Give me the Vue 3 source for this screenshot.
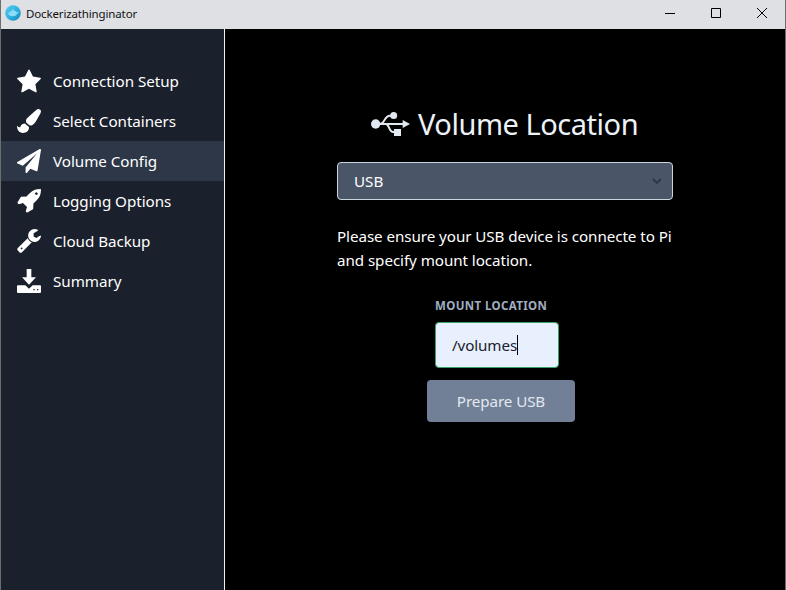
<script setup>
import { ref } from 'vue'

const items = [
  {
    label: 'Connection Setup', box: '64 0 1664 1664',
    path: 'M1728 647q0 22-26 48l-363 354 86 500q1 7 1 20 0 21-10.500 35.500t-30.500 14.500q-19 0-40-12l-449-236-449 236q-22 12-40 12-21 0-31.500-14.500t-10.500-35.500q0-6 2-20l86-500-364-354q-25-27-25-48 0-37 56-46l502-73 225-455q19-41 49-41t49 41l225 455 502 73q56 9 56 46z',
  },
  {
    label: 'Select Containers', box: '0 0 512 512',
    path: 'M167.02 309.34c-40.12 2.58-76.53 17.86-97.19 72.3-2.35 6.21-8 9.98-14.59 9.98-11.11 0-45.46-27.67-55.25-34.35C0 439.62 37.93 512 128 512c75.86 0 128-43.77 128-120.19 0-3.11-.65-6.08-.97-9.13l-88.01-73.34zM457.89 0c-15.16 0-29.37 6.71-40.21 16.45C213.27 199.05 192 203.34 192 257.09c0 13.7 3.25 26.76 8.73 38.7l63.82 53.18c7.21 1.8 14.64 3.03 22.39 3.03 62.11 0 98.11-45.47 211.16-256.46 7.38-14.35 13.9-29.85 13.9-45.99C512 20.64 486 0 457.89 0z',
  },
  {
    label: 'Volume Config', active: true, box: '0 0 1792 1792',
    path: 'M1764 11q33 24 27 64l-256 1536q-5 29-32 45-14 8-31 8-11 0-24-5l-453-185-242 295q-18 23-49 23-13 0-22-4-19-7-30.500-23.500t-11.500-36.500v-349l864-1059-1069 925-395-162q-37-14-40-55-2-40 32-59l1664-960q15-9 32-9 20 0 36 11z',
  },
  {
    label: 'Logging Options', box: '0 128 1664 1664',
    path: 'M1440 448q0-40-28-68t-68-28-68 28-28 68 28 68 68 28 68-28 28-68zm224-288q0 249-75.5 430.5t-253.500 360.500q-81 80-195 176l-20 379q-2 16-16 26l-384 224q-7 4-16 4-12 0-23-9l-64-64q-13-14-8-32l85-276-281-281-276 85q-3 1-9 1-14 0-23-9l-64-64q-17-19-5-39l224-384q10-14 26-16l379-20q96-114 176-195 188-187 358-258t431-71q14 0 24 9.500t10 22.500z',
  },
  {
    label: 'Cloud Backup', box: '64 128 1664 1664',
    path: 'M448 1472q0-26-19-45t-45-19-45 19-19 45 19 45 45 19 45-19 19-45zm644-420l-682 682q-37 37-90 37-52 0-91-37l-106-108q-38-36-38-90 0-53 38-91l681-681q39 98 114.500 173.500t173.500 114.500zm634-435q0 39-23 106-47 134-164.500 217.500t-258.500 83.500q-185 0-316.500-131.500t-131.500-316.500 131.500-316.500 316.500-131.500q58 0 121.500 16.500t107.500 46.500q16 11 16 28t-16 28l-293 169v224l193 107q5-3 79-48.500t135.500-81 70.500-35.500q15 0 23.500 10t8.500 25z',
  },
  {
    label: 'Summary', box: '0 0 72 72',
    path: 'M29 0H43V25H57L36 47 15 25H29ZM3 49H25L36 59 47 49H69Q72 49 72 52V69Q72 72 69 72H3Q0 72 0 69V52Q0 49 3 49ZM49 60V64H53V60ZM60 60V64H64V60Z',
  },
]
const mount = ref('/volumes')
</script>

<template>
  <div class="window">
    <header class="titlebar">
      <svg class="logo" viewBox="0 0 16 16">
        <defs>
          <linearGradient id="sea" x1="0" y1="0" x2="1" y2="1">
            <stop offset="0" stop-color="#58cbed" />
            <stop offset="0.5" stop-color="#2fb4e4" />
            <stop offset="1" stop-color="#1683b4" />
          </linearGradient>
        </defs>
        <circle cx="8" cy="8" r="7.8" fill="url(#sea)" />
        <path d="M3 7.5h2V6h2V4.500h2V6h2v1.500l2-.8.8 1-1.600 1q-1.200 2.600-4.400 2.600Q3.500 11.300 3 7.500Z" fill="#8adcf4" />
      </svg>
      <span class="title">Dockerizathinginator</span>
      <div class="controls">
        <svg viewBox="0 0 12 12"><path d="M1 6.500H11" /></svg>
        <svg viewBox="0 0 12 12"><path d="M1.500 1.500h9v9h-9z" /></svg>
        <svg viewBox="0 0 12 12"><path d="M1 1 11 11M11 1 1 11" /></svg>
      </div>
    </header>
    <div class="body">
      <nav class="sidebar">
        <a v-for="item in items" :key="item.label" class="item" :class="{ active: item.active }">
          <svg class="icon" :viewBox="item.box"><path :d="item.path" fill-rule="evenodd" /></svg>
          <span>{{ item.label }}</span>
        </a>
      </nav>
      <main class="content">
        <h1 class="heading">
          <svg class="usb" viewBox="0 0 117 72">
            <circle cx="14" cy="36" r="14" />
            <circle cx="68" cy="10.500" r="10.500" />
            <path d="M69 51H90V72H69ZM95 24 117 36 95 48Z" />
            <path class="wire" d="M14 36H98M27 36C42 36 39 11 57 11H67M44 36C56 36 52 60 67 60H76" />
          </svg>
          <span>Volume Location</span>
        </h1>
        <div class="select">
          <span>USB</span>
          <svg viewBox="0 0 12 8"><path d="M2 2 6 6 10 2" /></svg>
        </div>
        <p class="note">Please ensure your USB device is connecte to Pi<br>and specify mount location.</p>
        <label class="label">Mount Location</label>
        <div class="input"><span>{{ mount }}</span><i class="caret"></i></div>
        <button class="button">Prepare USB</button>
      </main>
    </div>
  </div>
</template>

<style>
body { margin: 0; background: #000; overflow: hidden; }
</style>

<style scoped>
.window {
  box-sizing: border-box;
  width: 786px;
  height: 590px;
  display: flex;
  flex-direction: column;
  border: solid #6d6d6d;
  border-width: 0 1px;
  background: #000;
  color: #fff;
  font-family: "Noto Sans", "Open Sans", sans-serif;
  font-size: 15.2px;
  line-height: 24px;
}
.titlebar {
  height: 29px;
  flex: none;
  display: flex;
  align-items: center;
  background: #dfe0e4;
  color: #111;
  padding: 0 17px 0 4px;
  box-sizing: border-box;
}
.logo { width: 16px; height: 16px; margin-top: -3px; }
.title { font-size: 11.500px; line-height: 26px; margin: -2px 0 0 5px; letter-spacing: -0.14px; }
.controls { margin: -3px 0 0 auto; display: flex; gap: 34px; }
.controls svg { width: 12px; height: 12px; fill: none; stroke: #000; stroke-width: 1; }
.body { flex: 1; display: flex; }
.sidebar {
  box-sizing: border-box;
  width: 224px;
  flex: none;
  background: #1a202c;
  border-right: 1px solid #edf2f7;
  padding-top: 32px;
}
.item {
  height: 40px;
  display: flex;
  align-items: center;
  gap: 12px;
  padding-left: 16px;
  letter-spacing: -0.04px;
}
.active { background: #2d3748; }
.icon { width: 24px; height: 24px; fill: #fff; }
.content { flex: 1; display: flex; flex-direction: column; padding: 71px 112px 0; }
.heading {
  margin: 0;
  height: 48px;
  display: flex;
  align-items: center;
  padding-left: 34px;
  gap: 8px;
  font-size: 29px;
  font-weight: 400;
  line-height: 48px;
  letter-spacing: -0.47px;
  color: #edf2f7;
  white-space: nowrap;
}
.usb { width: 39px; height: 24px; flex: none; fill: #e2e8f0; }
.wire { fill: none; stroke: #e2e8f0; stroke-width: 6; }
.select {
  box-sizing: border-box;
  width: 336px;
  height: 38px;
  margin-top: 14px;
  padding: 0 9px 0 16px;
  display: flex;
  align-items: center;
  justify-content: space-between;
  background: #4a5568;
  border: 1px solid #cbd5e0;
  border-radius: 4px;
}
.select svg { width: 12px; height: 8px; fill: none; stroke: #2d3748; stroke-width: 1.800; }
.note { margin: 24px 0 0; white-space: nowrap; letter-spacing: -0.07px; }
.label {
  margin: 26px 0 0 98px;
  font-size: 11.500px;
  font-weight: 700;
  line-height: 16px;
  letter-spacing: 0.38px;
  text-transform: uppercase;
  color: #a0aec0;
  white-space: nowrap;
}
.input {
  box-sizing: border-box;
  width: 124px;
  height: 46px;
  margin: 8px 0 0 98px;
  padding-left: 16px;
  display: flex;
  align-items: center;
  background: #e8f0fe;
  border: 1px solid #38a169;
  border-radius: 4px;
  color: #1a202c;
  letter-spacing: -0.1px;
}
.caret { width: 1px; height: 20px; background: #000; }
.button {
  width: 148px;
  height: 42px;
  margin: 12px 0 0 90px;
  padding: 0;
  border: 0;
  border-radius: 4px;
  background: #718096;
  color: #e2e8f0;
  font: inherit;
  letter-spacing: -0.1px;
}
</style>
